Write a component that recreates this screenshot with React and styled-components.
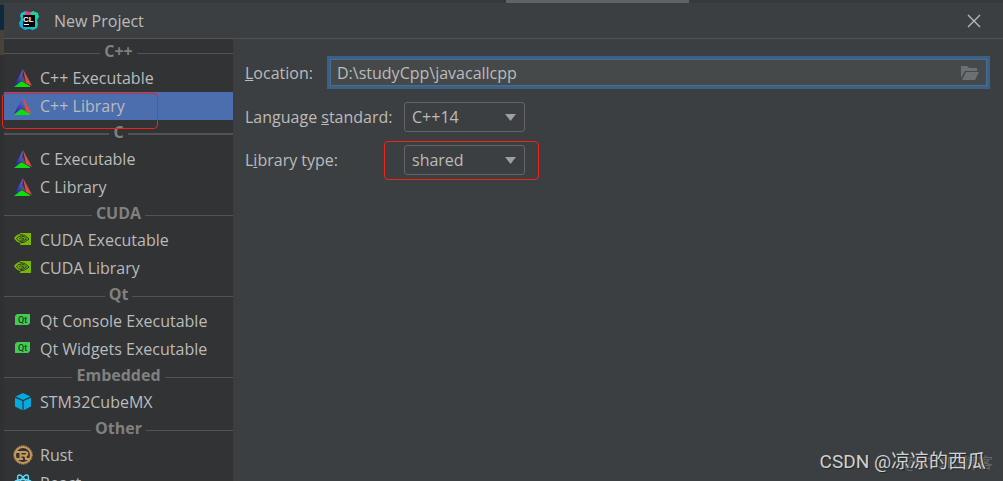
import React, { useState } from 'react';
import styled, { createGlobalStyle, css } from 'styled-components';

const GlobalStyle = createGlobalStyle`
    * {
        box-sizing: border-box;
    }

    body {
        margin: 0;
        background: #2f3234;
        color: #bbbbbb;
        font-family: "Open Sans", "Noto Sans CJK SC", sans-serif;
        font-size: 16px;
        line-height: 20px;
    }

    button, input, select {
        font: inherit;
        color: inherit;
    }
`;

const Desktop = styled.div`
    position: relative;
    display: flex;
    flex-direction: column;
    height: 100vh;
    overflow: hidden;
`;

const EditorScroll = styled.div`
    display: grid;
    grid-template-columns: 506fr 183fr 314fr;
    flex: none;
    height: 3px;
    background: #35393a;

    &::before {
        content: "";
        grid-column: 2;
        background: #5f6365;
    }
`;

const Workspace = styled.div`
    display: flex;
    flex: 1;
    min-height: 0;
`;

const EditorEdge = styled.div`
    flex: none;
    width: 4px;
    background: linear-gradient(#35393a 2px, #0d293e 2px 27px, #47433a 27px 52px, #2e3032 52px);
`;

const Dialog = styled.section`
    display: flex;
    flex: 1;
    flex-direction: column;
    min-width: 0;
    background: #3c3f41;
`;

const TitleBar = styled.header`
    display: flex;
    flex: none;
    align-items: center;
    gap: 14px;
    height: 36px;
    padding: 0 22px 0 14px;
    border-bottom: 1px solid #515355;
`;

const Title = styled.h1`
    flex: 1;
    margin: 0;
    font-size: 16px;
    font-weight: 400;
`;

const CloseButton = styled.button`
    display: flex;
    padding: 0;
    border: 0;
    background: none;
`;

const Content = styled.div`
    display: flex;
    flex: 1;
    min-height: 0;
`;

const Sidebar = styled.nav`
    flex: none;
    width: 229px;
    background: #313335;
`;

const GroupTitle = styled.h2`
    display: flex;
    align-items: center;
    gap: 4px;
    height: 25px;
    margin: 0;
    padding-bottom: 1px;
    color: #808080;
    font-size: 16px;
    font-weight: 700;

    &::before,
    &::after {
        content: "";
        flex: 1;
        height: ${({ $thick }) => ($thick ? '2px' : '1px')};
        margin-top: 4px;
        background: #515355;
    }
`;

const List = styled.ul`
    margin: 0;
    padding: 0;
    list-style: none;
`;

const ListItem = styled.li`
    position: relative;
`;

const Template = styled.button`
    display: flex;
    align-items: center;
    gap: 7px;
    width: 100%;
    height: 28px;
    padding: 0 9px;
    border: 0;
    background: ${({ $active }) => ($active ? '#4b6eaf' : 'transparent')};
    white-space: nowrap;
    text-align: left;

    svg {
        flex: none;
    }
`;

const redFrame = css`
    border: 1px solid #f02318;
    border-radius: 4px;
    pointer-events: none;
`;

const ItemMark = styled.span`
    ${redFrame}
    position: absolute;
    top: 1px;
    left: -2px;
    width: 156px;
    height: 36px;
`;

const FieldMark = styled.span`
    ${redFrame}
    position: absolute;
    inset: -4px -14px -5px -20px;
`;

const Form = styled.form`
    display: flex;
    flex: 1;
    flex-direction: column;
    gap: 13px;
    min-width: 0;
    padding: 17px 13px 0 12px;
`;

const Row = styled.div`
    display: flex;
    align-items: center;
`;

const Label = styled.label`
    flex: none;
    width: ${({ $wide }) => ($wide ? '159px' : '82px')};
`;

const PathBox = styled.div`
    display: flex;
    flex: 1;
    align-items: center;
    height: 33px;
    padding: 0 7px;
    border: 3px solid #3d6185;
    background: #45494a;
    box-shadow: inset 0 0 0 1px #466d94;
`;

const PathInput = styled.input`
    flex: 1;
    min-width: 0;
    padding: 0;
    border: 0;
    outline: 0;
    background: none;
`;

const SelectBox = styled.div`
    position: relative;
    display: grid;
    align-items: center;
    width: 121px;

    > select,
    > svg {
        grid-area: 1 / 1;
    }

    > svg {
        justify-self: end;
        margin-right: 9px;
        pointer-events: none;
    }
`;

const Select = styled.select`
    appearance: none;
    width: 100%;
    height: 30px;
    padding: 0 7px;
    border: 1px solid #646464;
    border-radius: 3px;
    outline: 0;
    background: #3c3f41;
`;

const Watermark = styled.div`
    position: absolute;
    right: 17px;
    bottom: 5px;
    color: #cfd0d0;
    font-family: Roboto, "Noto Sans CJK SC", sans-serif;
    font-size: 19px;
    line-height: 28px;
    text-shadow: 1px 1px 1px #222426;
`;

const FaintMark = styled(Watermark)`
    right: 10px;
    bottom: 4px;
    color: #65686a;
    font-size: 15px;
    text-shadow: none;
`;

const ClionIcon = () => (
    <svg width="22" height="22" viewBox="0 0 22 22" aria-hidden="true">
        <defs>
            <linearGradient id="clion" x1="0" y1="1" x2="1" y2="0">
                <stop offset="0" stopColor="#0a9de8" />
                <stop offset="0.5" stopColor="#14c9c0" />
                <stop offset="1" stopColor="#21d789" />
            </linearGradient>
        </defs>
        <path fill="url(#clion)" d="M3 3 8 1l3 2 4-2 5 2 1 4-2 3 1 4-1 4-4 2-4-1-4 1-5-3-1-4 2-4-1-3z" />
        <path fill="#ed358c" d="m8 1 4 1 1 3-5 1-1-2z" />
        <path d="M5 5h12v12H5z" />
        <text x="5" y="12" fill="#fff" fontFamily="Liberation Sans, sans-serif" fontSize="8" fontWeight="700">CL</text>
        <path fill="#fff" d="M6 14h5v1H6z" />
    </svg>
);

const CmakeIcon = () => (
    <svg width="20" height="20" viewBox="0 0 20 20" aria-hidden="true">
        <defs>
            <linearGradient id="cmake" x1="1" y1="0" x2="0.3" y2="1">
                <stop offset="0" stopColor="#6c6ce0" />
                <stop offset="1" stopColor="#2222a8" />
            </linearGradient>
        </defs>
        <path fill="#555759" d="m10 8 3 7-6-2z" />
        <path fill="url(#cmake)" d="M10 1 1 18l8-6z" />
        <path fill="#e04a4a" d="m10 1 9 17-6-3z" />
        <path fill="#0ce00c" d="m1 19 5-4q2-2 4-1l7 4v1z" />
    </svg>
);

const NvidiaIcon = () => (
    <svg width="20" height="20" viewBox="0 0 20 20" aria-hidden="true">
        <path fill="#76b900" d="M7 3h11v12H7z" />
        <path fill="#76b900" d="M1 8q3-4 6-4v9q-4-1-6-5z" />
        <g fill="none" stroke="#313335">
            <path d="M7 4.600q5-.6 9 4.400-4 4-9 4" />
            <path d="M3.500 8.500Q6 5.600 8.500 6q3 .4 5 3-3 2.500-5.500 2.500T3.500 8.500" />
            <path d="M6 9q1-1.500 3-1t2 1.500q-2 1-3.500.5" />
        </g>
    </svg>
);

const QtIcon = () => (
    <svg width="20" height="20" viewBox="0 0 20 20" aria-hidden="true">
        <path fill="#41cd52" d="M4 3h13v9l-2 2H2V5z" />
        <text x="5" y="12" fill="#213a26" fontFamily="Roboto, sans-serif" fontSize="9" fontWeight="500">Qt</text>
    </svg>
);

const CubeIcon = () => (
    <svg width="20" height="20" viewBox="0 0 20 20" aria-hidden="true">
        <path fill="#03a9e0" d="m10 1 7.500 3.500L10 8 2.500 4.500zM2 5.800 9.400 9v9.200L2 14.500zM18 5.800 10.600 9v9.200l7.400-3.700z" />
    </svg>
);

const RustIcon = () => (
    <svg width="20" height="20" viewBox="0 0 20 20" fill="none" stroke="#c9995c" aria-hidden="true">
        <circle cx="10" cy="10" r="8" strokeWidth="2" />
        <circle cx="10" cy="10" r="9.300" strokeDasharray="1.200 1" />
        <path strokeWidth="2" d="M3 7h9q2.300 0 2.300 1.700T12 10.500H7M7.500 7v7M3.500 14H10M11 10.500q2 0 2 3.500h3.500" />
    </svg>
);

const ReactIcon = () => (
    <svg width="20" height="20" viewBox="0 0 20 20" fill="none" stroke="#61dafb" strokeWidth="1.400" aria-hidden="true">
        <ellipse cx="10" cy="10" rx="9" ry="3.500" />
        <ellipse cx="10" cy="10" rx="9" ry="3.500" transform="rotate(60 10 10)" />
        <ellipse cx="10" cy="10" rx="9" ry="3.500" transform="rotate(120 10 10)" />
        <circle cx="10" cy="10" r="1" />
    </svg>
);

const CloseIcon = () => (
    <svg width="14" height="14" viewBox="0 0 14 14" aria-hidden="true">
        <path stroke="#bbbbbb" strokeWidth="1.300" d="m1 1 12 12M13 1 1 13" />
    </svg>
);

const FolderIcon = () => (
    <svg width="20" height="16" viewBox="0 0 20 16" fill="#6a7073" aria-hidden="true">
        <path d="M1 1h6l2 2h8v3H5l-4 7z" />
        <path d="M6 7h13l-4 8H2z" />
    </svg>
);

const ArrowIcon = () => (
    <svg width="11" height="7" viewBox="0 0 11 7" aria-hidden="true">
        <path fill="#9da0a2" d="M0 0h11L5.500 7z" />
    </svg>
);

const groups = [
    { title: 'C++', icon: CmakeIcon, items: ['C++ Executable', 'C++ Library'] },
    { title: 'C', icon: CmakeIcon, items: ['C Executable', 'C Library'], thick: true },
    { title: 'CUDA', icon: NvidiaIcon, items: ['CUDA Executable', 'CUDA Library'] },
    { title: 'Qt', icon: QtIcon, items: ['Qt Console Executable', 'Qt Widgets Executable'] },
    { title: 'Embedded', icon: CubeIcon, items: ['STM32CubeMX'] },
    { title: 'Other', icon: RustIcon, items: ['Rust', 'React'] },
];

const icons = { React: ReactIcon };

const TemplateGroup = ({ group, selected, onSelect }) => (
    <>
        <GroupTitle $thick={group.thick}>{group.title}</GroupTitle>
        <List>
            {group.items.map((name) => {
                const Icon = icons[name] || group.icon;

                return (
                    <ListItem key={name}>
                        <Template type="button" $active={name === selected} onClick={() => onSelect(name)}>
                            <Icon />
                            {name}
                        </Template>
                        {name === 'C++ Library' && <ItemMark />}
                    </ListItem>
                );
            })}
        </List>
    </>
);

const App = () => {
    const [selected, setSelected] = useState('C++ Library');
    const [location, setLocation] = useState('D:\\studyCpp\\javacallcpp');

    return (
        <Desktop>
            <GlobalStyle />
            <EditorScroll />
            <Workspace>
                <EditorEdge />
                <Dialog>
                    <TitleBar>
                        <ClionIcon />
                        <Title>New Project</Title>
                        <CloseButton type="button" aria-label="Close">
                            <CloseIcon />
                        </CloseButton>
                    </TitleBar>
                    <Content>
                        <Sidebar>
                            {groups.map((group) => (
                                <TemplateGroup
                                    key={group.title}
                                    group={group}
                                    selected={selected}
                                    onSelect={setSelected}
                                />
                            ))}
                        </Sidebar>
                        <Form>
                            <Row>
                                <Label htmlFor="location"><u>L</u>ocation:</Label>
                                <PathBox>
                                    <PathInput
                                        id="location"
                                        value={location}
                                        onChange={(e) => setLocation(e.target.value)}
                                    />
                                    <CloseButton type="button" aria-label="Browse">
                                        <FolderIcon />
                                    </CloseButton>
                                </PathBox>
                            </Row>
                            <Row>
                                <Label $wide htmlFor="standard">Language <u>s</u>tandard:</Label>
                                <SelectBox>
                                    <Select id="standard" defaultValue="C++14">
                                        <option>C++11</option>
                                        <option>C++14</option>
                                        <option>C++17</option>
                                    </Select>
                                    <ArrowIcon />
                                </SelectBox>
                            </Row>
                            <Row>
                                <Label $wide htmlFor="type">L<u>i</u>brary type:</Label>
                                <SelectBox>
                                    <Select id="type" defaultValue="shared">
                                        <option>static</option>
                                        <option>shared</option>
                                    </Select>
                                    <ArrowIcon />
                                    <FieldMark />
                                </SelectBox>
                            </Row>
                        </Form>
                    </Content>
                </Dialog>
            </Workspace>
            <FaintMark>@51CTO博客</FaintMark>
            <Watermark>CSDN @凉凉的西瓜</Watermark>
        </Desktop>
    );
};

export default App;
